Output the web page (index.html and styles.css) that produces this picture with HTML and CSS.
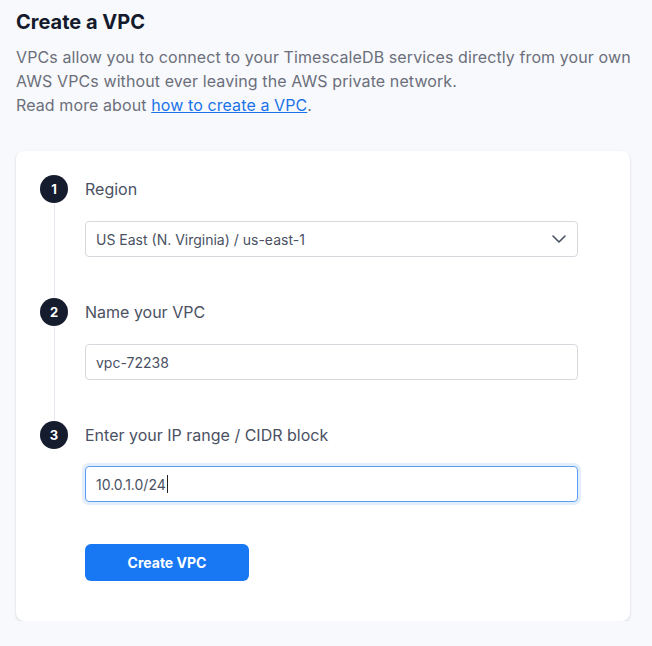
FILE: index.html
```html
<!DOCTYPE html>
<html lang="en">
<head>
<meta charset="utf-8">
<title>Create a VPC</title>
<link rel="stylesheet" href="styles.css">
</head>
<body>
<main class="page">
  <h1 class="title">Create a VPC</h1>
  <p class="intro">VPCs allow you to connect to your TimescaleDB services directly from your own AWS VPCs without ever leaving the AWS private network.<br>Read more about <a href="#" class="link">how to create a VPC</a>.</p>

  <section class="card">
    <div class="step">
      <div class="rail"><span class="num">1</span><span class="line"></span></div>
      <div class="body">
        <div class="label">Region</div>
        <div class="field select">
          <span>US East (N. Virginia) / us-east-1</span>
          <svg class="chev" width="14" height="8" viewBox="0 0 14 8"><path d="M1 1l6 6 6-6" fill="none" stroke="#4a5163" stroke-width="1.6" stroke-linecap="round" stroke-linejoin="round"/></svg>
        </div>
      </div>
    </div>
    <div class="step">
      <div class="rail"><span class="num">2</span><span class="line"></span></div>
      <div class="body">
        <div class="label">Name your VPC</div>
        <div class="field"><span>vpc-72238</span></div>
      </div>
    </div>
    <div class="step last">
      <div class="rail"><span class="num">3</span></div>
      <div class="body">
        <div class="label">Enter your IP range / CIDR block</div>
        <div class="field focus"><span>10.0.1.0/24</span><span class="caret"></span></div>
        <button class="btn">Create VPC</button>
      </div>
    </div>
  </section>
</main>
</body>
</html>
```

FILE: styles.css
```css
* { box-sizing: border-box; }
html, body { margin: 0; padding: 0; }
body {
  background: #f8f9fc;
  font-family: Inter, "Noto Sans", sans-serif;
  color: #4a5163;
}
.page { padding: 8px 16px 0 16px; width: 652px; }
.title {
  margin: 0;
  font-size: 20px;
  line-height: 28px;
  font-weight: 700;
  color: #141b2d;
}
.intro {
  margin: 9px 0 0 0;
  font-size: 16px;
  line-height: 24px;
  letter-spacing: 0.1px;
  color: #6b6f7b;
}
.link { color: #1a73e8; text-decoration: underline; }
.card {
  margin-top: 34px;
  width: 614px;
  background: #ffffff;
  border-radius: 8px;
  box-shadow: 0 1px 3px rgba(20, 27, 45, 0.12), 0 1px 2px rgba(20, 27, 45, 0.06);
  padding: 24px 52px 40px 24px;
}
.step { display: flex; gap: 17px; }
.rail { width: 28px; display: flex; flex-direction: column; align-items: center; }
.num {
  width: 28px; height: 28px; border-radius: 50%;
  background: #141c2e; color: #fff;
  font-size: 13px; font-weight: 700;
  display: flex; align-items: center; justify-content: center;
  flex: none;
}
.line { flex: 1; width: 1px; background: #e3e8f3; }
.body { flex: 1; padding-bottom: 41px; }
.step.last .body { padding-bottom: 0; }
.label { height: 28px; line-height: 28px; font-size: 16px; color: #4a5163; }
.field {
  margin-top: 18px;
  height: 36px;
  border: 1px solid #d6d8de;
  border-radius: 4px;
  padding: 0 10px;
  display: flex; align-items: center;
  font-size: 14px; color: #4a5163;
}
.select { justify-content: space-between; }
.chev { margin-right: 1px; }
.focus {
  margin-top: 17px;
  border: 1.5px solid #5b9cf4;
  box-shadow: 0 0 0 3px #e3eefd;
}
.caret { width: 1px; height: 18px; background: #222; margin-left: 1px; }
.btn {
  display: block;
  margin-top: 42px;
  width: 164px; height: 37px;
  border: 0; border-radius: 6px;
  background: #1877f2; color: #fff;
  font-family: inherit; font-size: 14px; font-weight: 700;
}
```
